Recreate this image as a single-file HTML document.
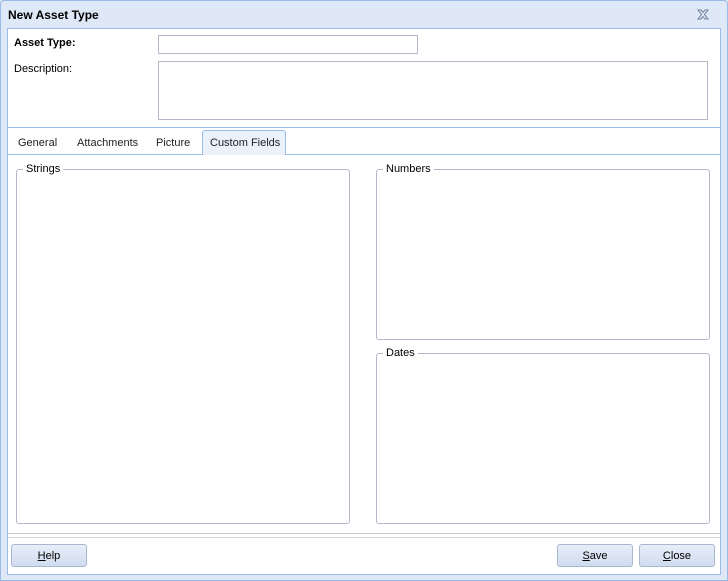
<!DOCTYPE html>
<html><head><style>
*{margin:0;padding:0;box-sizing:border-box}
body{width:728px;height:581px;background:#dfe8f6;font-family:"Liberation Sans",Arial,sans-serif;font-size:11px;color:#000;position:relative;overflow:hidden}
.a{position:absolute}
.win{left:0;top:0;width:728px;height:581px;border:1px solid #99bbe8;border-radius:4px 4px 0 0;background:#dfe8f6}
.title{left:8px;top:8px;font-weight:bold;font-size:12px;color:#000}
.panel{left:7px;top:28px;width:714px;height:547px;background:#fff;border:1px solid #99bbe8}
.inp{border:1px solid #b5b8c8;background:#fff}
.tab{top:137px;color:#222}
.gb{border:1px solid #b5b8c8;border-radius:3px}
.leg{background:#fff;padding:0 3px;top:-7px;left:6px;position:absolute}
.btn{height:23px;border:1px solid #a8b8cf;border-radius:3px;background:linear-gradient(#e8eef8,#cfdcef);text-align:center;line-height:22px;color:#000}
</style></head><body>
<div class="a win"></div>
<div class="a title">New Asset Type</div>
<svg class="a" style="left:697px;top:9px" width="12" height="11" viewBox="0 0 12 11"><path d="M1 1h3l2 2.5L8 1h3L7.5 5.5 11 10H8L6 7.5 4 10H1l3.5-4.5z" fill="none" stroke="#6f7f98" stroke-width="1"/></svg>
<div class="a panel"></div>
<div class="a" style="left:14px;top:37px;font-weight:bold">Asset Type:</div>
<div class="a inp" style="left:158px;top:35px;width:260px;height:19px"></div>
<div class="a" style="left:14px;top:63px">Description:</div>
<div class="a inp" style="left:158px;top:61px;width:550px;height:59px"></div>
<div class="a" style="left:8px;top:127px;width:712px;height:1px;background:#99bbe8"></div>
<div class="a" style="left:8px;top:154px;width:712px;height:1px;background:#99bbe8"></div>
<div class="a" style="left:202px;top:130px;width:84px;height:25px;border:1px solid #99bbe8;border-bottom:none;background:#eaf1fb;border-radius:3px 3px 0 0"></div>
<div class="a tab" style="left:18px">General</div>
<div class="a tab" style="left:77px">Attachments</div>
<div class="a tab" style="left:156px">Picture</div>
<div class="a tab" style="left:210px">Custom Fields</div>
<div class="a gb" style="left:16px;top:169px;width:334px;height:355px"><span class="leg">Strings</span></div>
<div class="a gb" style="left:376px;top:169px;width:334px;height:171px"><span class="leg">Numbers</span></div>
<div class="a gb" style="left:376px;top:353px;width:334px;height:171px"><span class="leg">Dates</span></div>
<div class="a" style="left:8px;top:533px;width:712px;height:1px;background:#c8c8c8"></div>
<div class="a" style="left:8px;top:537px;width:712px;height:1px;background:#d8d8d8"></div>
<div class="a btn" style="left:11px;top:544px;width:76px"><u>H</u>elp</div>
<div class="a btn" style="left:557px;top:544px;width:76px"><u>S</u>ave</div>
<div class="a btn" style="left:639px;top:544px;width:76px"><u>C</u>lose</div>
</body></html>
